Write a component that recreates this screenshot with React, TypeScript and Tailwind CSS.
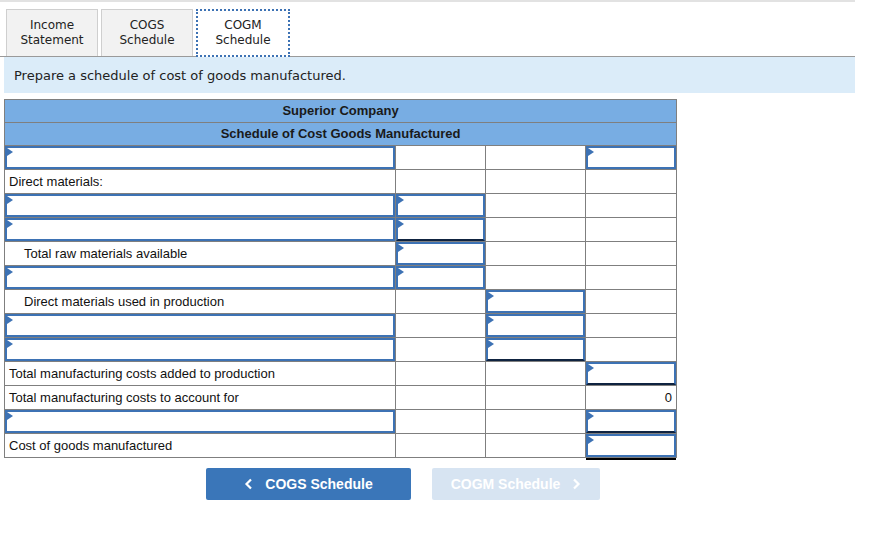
import React from 'react';

type Cell = 'in' | 'in-u' | 'in-uu' | 'zero' | null;

type Row = {
  label?: string;
  indent?: boolean;
  labelInput?: boolean;
  cols: [Cell, Cell, Cell];
};

const rows: Row[] = [
  { labelInput: true, cols: [null, null, 'in'] },
  { label: 'Direct materials:', cols: [null, null, null] },
  { labelInput: true, cols: ['in', null, null] },
  { labelInput: true, cols: ['in-u', null, null] },
  { label: 'Total raw materials available', indent: true, cols: ['in', null, null] },
  { labelInput: true, cols: ['in', null, null] },
  { label: 'Direct materials used in production', indent: true, cols: [null, 'in', null] },
  { labelInput: true, cols: [null, 'in', null] },
  { labelInput: true, cols: [null, 'in-u', null] },
  { label: 'Total manufacturing costs added to production', cols: [null, null, 'in-u'] },
  { label: 'Total manufacturing costs to account for', cols: [null, null, 'zero'] },
  { labelInput: true, cols: [null, null, 'in-u'] },
  { label: 'Cost of goods manufactured', cols: [null, null, 'in-uu'] },
];

function InputBox({ under }: { under?: 'single' | 'double' }) {
  return (
    <div
      className={`relative h-[23px] border-2 border-[#3d72b4] ${
        under === 'single' ? 'border-b-[#0f2340]' : ''
      }`}
    >
      <span className="absolute left-0 top-0 w-0 h-0 border-y-[4px] border-y-transparent border-l-[6px] border-l-[#3d72b4]" />
      {under === 'double' && (
        <div className="absolute -left-[2px] -right-[2px] -bottom-[5px] h-[2px] bg-black" />
      )}
    </div>
  );
}

function ValueCell({ c }: { c: Cell }) {
  if (c === 'in') return <InputBox />;
  if (c === 'in-u') return <InputBox under="single" />;
  if (c === 'in-uu') return <InputBox under="double" />;
  if (c === 'zero')
    return <div className="h-[23px] flex items-center justify-end pr-1">0</div>;
  return <div className="h-[23px]" />;
}

export default function App() {
  return (
    <div className="w-[872px] h-[540px] bg-white relative" style={{ fontFamily: '"DejaVu Sans", Verdana, sans-serif' }}>
      <div className="h-[2px] w-[855px] bg-[#e2e2e2]" />

      {/* Tabs */}
      <div className="flex gap-[3px] pl-[6px] pt-[7px] h-[55px] w-[855px] border-b border-[#9a9a9a]">
        {['Income\nStatement', 'COGS\nSchedule'].map((t) => (
          <div
            key={t}
            className="w-[92px] h-[47px] bg-[#f2f2f2] border border-b-0 border-[#cfcfcf] flex items-center justify-center text-center text-[12px] leading-[15px] text-[#222] whitespace-pre-line"
          >
            {t}
          </div>
        ))}
        <div className="w-[94px] h-[48px] -mb-px bg-white border-2 border-dotted border-[#3d72b4] flex items-center justify-center text-center text-[12px] leading-[15px] text-[#222] whitespace-pre-line">
          {'COGM\nSchedule'}
        </div>
      </div>

      {/* Instructions */}
      <div className="ml-[4px] w-[851px] h-[36px] bg-[#dbecf9] flex items-center pl-[10px] pt-[2px] text-[13px] text-[#222]">
        Prepare a schedule of cost of goods manufactured.
      </div>

      {/* Schedule */}
      <div className="ml-[4px] mt-[6px]" style={{ fontFamily: '"Liberation Sans", Arial, sans-serif' }}>
        <table className="border-collapse text-[13px] text-[#111] w-[672px] table-fixed">
          <colgroup>
            <col className="w-[391px]" />
            <col className="w-[90px]" />
            <col className="w-[100px]" />
            <col className="w-[91px]" />
          </colgroup>
          <thead>
            <tr>
              <th colSpan={4} className="bg-[#78ade3] border border-[#7f7f7f] h-[23px] font-bold text-[13px] text-[#1a1a1a] p-0">
                Superior Company
              </th>
            </tr>
            <tr>
              <th colSpan={4} className="bg-[#78ade3] border border-[#7f7f7f] h-[23px] font-bold text-[13px] text-[#1a1a1a] p-0">
                Schedule of Cost Goods Manufactured
              </th>
            </tr>
          </thead>
          <tbody>
            {rows.map((r, i) => (
              <tr key={i}>
                <td className="border border-[#7f7f7f] p-0 h-[24px]">
                  {r.labelInput ? (
                    <InputBox />
                  ) : (
                    <div className={`h-[23px] flex items-center ${r.indent ? 'pl-[19px]' : 'pl-[4px]'}`}>
                      {r.label}
                    </div>
                  )}
                </td>
                {r.cols.map((c, j) => (
                  <td key={j} className="border border-[#7f7f7f] p-0 h-[24px]">
                    <ValueCell c={c} />
                  </td>
                ))}
              </tr>
            ))}
          </tbody>
        </table>
      </div>

      {/* Nav buttons */}
      <div className="flex mt-[10px] ml-[206px] gap-[21px]" style={{ fontFamily: '"Liberation Sans", Arial, sans-serif' }}>
        <div className="w-[205px] h-[32px] bg-[#3a76b9] rounded-[2px] flex items-center justify-center gap-[12px] text-white font-bold text-[14px]">
          <svg width="9" height="12" viewBox="0 0 9 12" fill="none">
            <path d="M7 1.5 L2.5 6 L7 10.5" stroke="white" strokeWidth="2.2" />
          </svg>
          COGS Schedule
        </div>
        <div className="w-[168px] h-[32px] bg-[#d7e4f2] rounded-[2px] flex items-center justify-center gap-[12px] text-white font-bold text-[14px]">
          COGM Schedule
          <svg width="9" height="12" viewBox="0 0 9 12" fill="none">
            <path d="M2 1.5 L6.5 6 L2 10.5" stroke="white" strokeWidth="2.2" />
          </svg>
        </div>
      </div>
    </div>
  );
}
